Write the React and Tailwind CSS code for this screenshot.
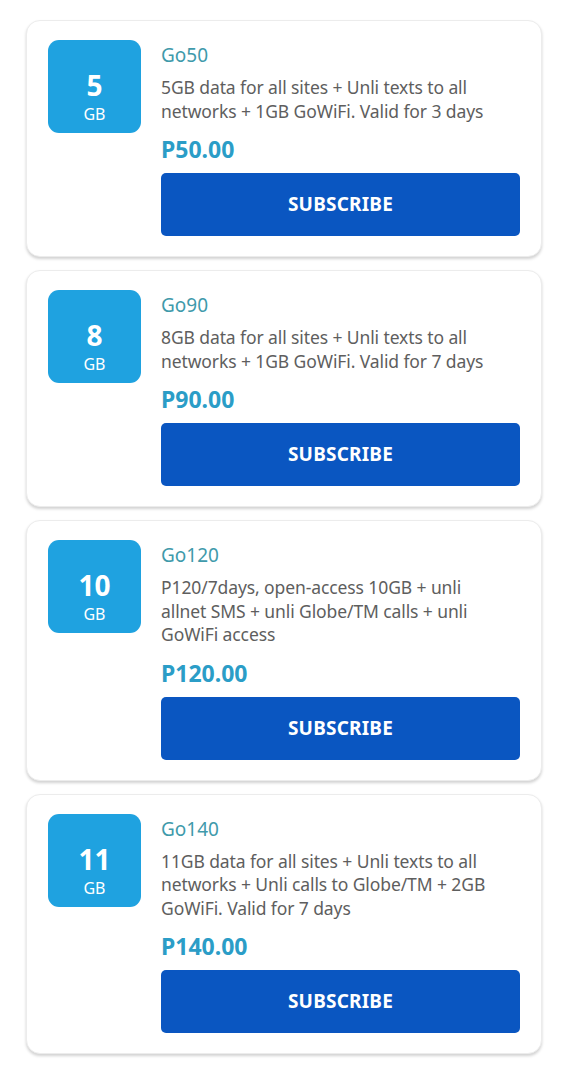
import React from "react"

const plans = [
  {
    gb: "5",
    name: "Go50",
    desc: "5GB data for all sites + Unli texts to all networks + 1GB GoWiFi. Valid for 3 days",
    price: "P50.00",
  },
  {
    gb: "8",
    name: "Go90",
    desc: "8GB data for all sites + Unli texts to all networks + 1GB GoWiFi. Valid for 7 days",
    price: "P90.00",
  },
  {
    gb: "10",
    name: "Go120",
    desc: "P120/7days, open-access 10GB + unli allnet SMS + unli Globe/TM calls + unli GoWiFi access",
    price: "P120.00",
  },
  {
    gb: "11",
    name: "Go140",
    desc: "11GB data for all sites + Unli texts to all networks + Unli calls to Globe/TM + 2GB GoWiFi. Valid for 7 days",
    price: "P140.00",
  },
]

const PlanCard = ({ plan }) => (
  <div className="bg-white rounded-[14px] border border-[#ececec] shadow-[0_2px_3px_rgba(0,0,0,0.18)] px-[21px] pt-[19px] pb-[20px] flex gap-[20px]">
    {/* Badge */}
    <div className="w-[93px] h-[93px] shrink-0 rounded-[11px] bg-[#1fa2e0] flex flex-col items-center pt-[31px] text-white">
      <span className="text-[28px] font-bold leading-[28px]">{plan.gb}</span>
      <span className="text-[16px] leading-[20px] mt-[5px]">GB</span>
    </div>

    {/* Details */}
    <div className="flex-1 flex flex-col">
      <h3 className="text-[19px] leading-[30px] text-[#3f9aab]">{plan.name}</h3>
      <p className="mt-[6px] text-[17.5px] leading-[23.5px] tracking-[-0.1px] text-[#5e5e5e] pr-[12px]">{plan.desc}</p>
      <p className="mt-[12px] text-[23px] leading-[28px] font-bold text-[#2b9dc7]">{plan.price}</p>
      <button className="mt-[10px] h-[63px] w-full rounded-[5px] bg-[#0a56c1] text-white text-[19px] font-bold tracking-[0.2px]">
        SUBSCRIBE
      </button>
    </div>
  </div>
)

const App = () => {
  return (
    <div className="min-h-[1080px] bg-white px-[26px] pt-[20px] flex flex-col gap-[13px] font-['Noto_Sans',sans-serif]">
      {plans.map((plan) => (
        <PlanCard key={plan.name} plan={plan} />
      ))}
    </div>
  )
}

export default App
